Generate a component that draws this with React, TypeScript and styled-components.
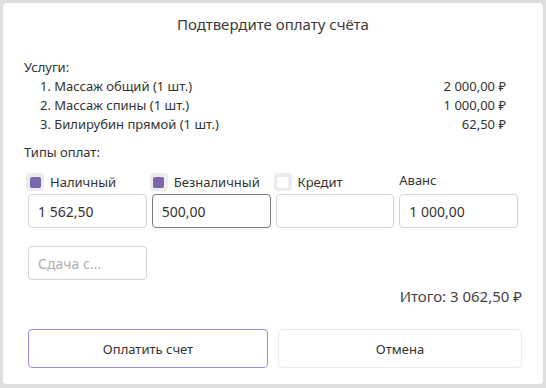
import React, { useEffect, useRef } from "react";
import styled, { createGlobalStyle } from "styled-components";

const GlobalStyle = createGlobalStyle`
  html, body {
    margin: 0;
    padding: 0;
    background: #dedede;
  }
  body {
    font-family: "Noto Sans", "Open Sans", sans-serif;
    color: #333;
  }
`;

const Backdrop = styled.div`
  width: 546px;
  height: 388px;
  box-sizing: border-box;
  padding: 3px 3px 4px 3px;
  background: #dedede;
`;

const Dialog = styled.div`
  height: 100%;
  box-sizing: border-box;
  background: #fff;
  border-radius: 4px;
  padding: 0 21px 0 21px;
  display: flex;
  flex-direction: column;
`;

const Title = styled.h2`
  margin: 0;
  height: 42px;
  display: flex;
  align-items: center;
  justify-content: center;
  font-size: 15px;
  font-weight: 400;
  color: #3a3a3a;
`;

const Label = styled.div`
  font-size: 13px;
  line-height: 19px;
`;

const Services = styled.div`
  margin-top: 13px;
`;

const ServiceList = styled.ol`
  list-style: none;
  margin: 0;
  padding: 0 16px 0 16px;
`;

const ServiceRow = styled.li`
  display: flex;
  justify-content: space-between;
  font-size: 13px;
  line-height: 19px;
`;

const PaymentTypes = styled.div`
  margin-top: 9px;
`;

const Columns = styled.div`
  display: grid;
  grid-template-columns: repeat(4, 1fr);
  column-gap: 5px;
  padding: 0 4px 0 4px;
  margin-top: 8px;
`;

const Column = styled.div`
  display: flex;
  flex-direction: column;
`;

const CheckLabel = styled.label`
  display: flex;
  align-items: center;
  gap: 6px;
  height: 24px;
  margin-left: -2px;
  font-size: 13px;
`;

const Box = styled.span<{ $checked?: boolean }>`
  width: 18px;
  height: 18px;
  box-sizing: border-box;
  border-radius: 4px;
  background: #ececec;
  display: flex;
  align-items: center;
  justify-content: center;

  &::after {
    content: "";
    width: 11px;
    height: 11px;
    border-radius: 2px;
    background: ${(p) => (p.$checked ? "#7966ad" : "#fff")};
  }
`;

const PlainLabel = styled.div`
  height: 24px;
  display: flex;
  align-items: center;
  font-size: 13px;
  padding-bottom: 5px;
  box-sizing: border-box;
`;

const Input = styled.input<{ $focused?: boolean }>`
  height: 34px;
  box-sizing: border-box;
  width: 100%;
  border: 1px solid ${(p) => (p.$focused ? "#7c7c7c" : "#d4d4d4")};
  border-radius: 4px;
  padding: 0 9px;
  font-family: "Noto Sans", "Open Sans", sans-serif;
  font-size: 14px;
  color: #333;
  caret-color: #222;
  background: #fff;
  outline: none;

  &::placeholder {
    color: #b0b0b0;
  }
`;

const ChangeRow = styled.div`
  display: grid;
  grid-template-columns: repeat(4, 1fr);
  column-gap: 5px;
  padding: 0 4px;
  margin-top: 18px;
`;

const Total = styled.div`
  text-align: right;
  font-size: 15px;
  line-height: 22px;
  margin-top: 5px;
  color: #444;
`;

const Buttons = styled.div`
  display: grid;
  grid-template-columns: 240px 1fr;
  column-gap: 10px;
  padding: 0 0 0 4px;
  margin-top: 22px;
`;

const Button = styled.button<{ $primary?: boolean }>`
  height: 39px;
  border-radius: 4px;
  background: #fff;
  border: 1px solid ${(p) => (p.$primary ? "#9a8de0" : "#ececec")};
  font-family: "Noto Sans", "Open Sans", sans-serif;
  font-size: 13px;
  color: #333;
  cursor: pointer;
`;

const services = [
  { name: "1. Массаж общий (1 шт.)", price: "2 000,00 ₽" },
  { name: "2. Массаж спины (1 шт.)", price: "1 000,00 ₽" },
  { name: "3. Билирубин прямой (1 шт.)", price: "62,50 ₽" },
];

export default function App() {
  const cashlessRef = useRef<HTMLInputElement>(null);

  useEffect(() => {
    const el = cashlessRef.current;
    if (el) {
      el.focus();
      el.setSelectionRange(el.value.length, el.value.length);
    }
  }, []);

  return (
    <>
      <GlobalStyle />
      <Backdrop>
        <Dialog>
          <Title>Подтвердите оплату счёта</Title>
          <Services>
            <Label>Услуги:</Label>
            <ServiceList>
              {services.map((s) => (
                <ServiceRow key={s.name}>
                  <span>{s.name}</span>
                  <span>{s.price}</span>
                </ServiceRow>
              ))}
            </ServiceList>
          </Services>
          <PaymentTypes>
            <Label>Типы оплат:</Label>
            <Columns>
              <Column>
                <CheckLabel>
                  <Box $checked />
                  Наличный
                </CheckLabel>
                <Input defaultValue="1 562,50" />
              </Column>
              <Column>
                <CheckLabel>
                  <Box $checked />
                  Безналичный
                </CheckLabel>
                <Input ref={cashlessRef} $focused defaultValue="500,00" />
              </Column>
              <Column>
                <CheckLabel>
                  <Box />
                  Кредит
                </CheckLabel>
                <Input defaultValue="" />
              </Column>
              <Column>
                <PlainLabel>Аванс</PlainLabel>
                <Input defaultValue="1 000,00" />
              </Column>
            </Columns>
          </PaymentTypes>
          <ChangeRow>
            <Input placeholder="Сдача с..." />
          </ChangeRow>
          <Total>Итого: 3 062,50 ₽</Total>
          <Buttons>
            <Button $primary>Оплатить счет</Button>
            <Button>Отмена</Button>
          </Buttons>
        </Dialog>
      </Backdrop>
    </>
  );
}
